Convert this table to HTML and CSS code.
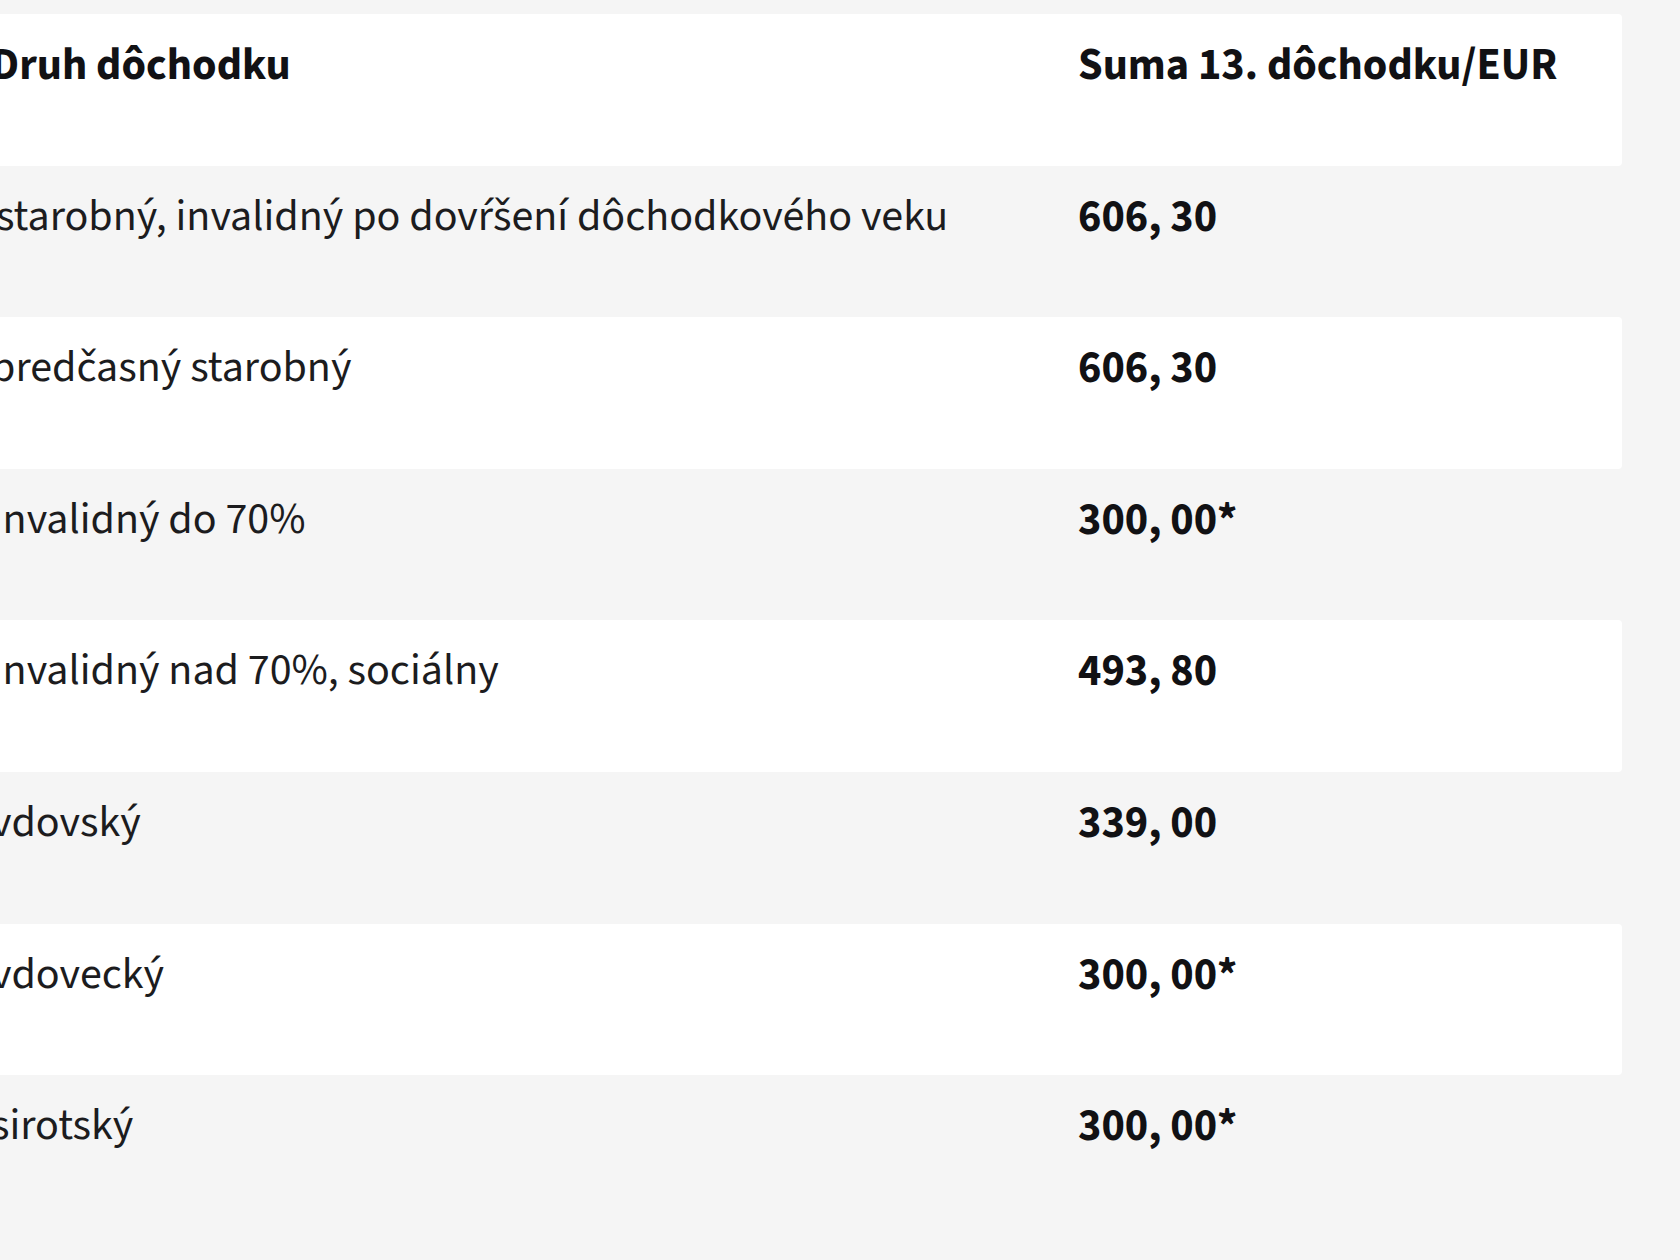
FILE: index.html
```html
<!DOCTYPE html>
<html lang="sk">
<head>
<meta charset="utf-8">
<title>13. dôchodok</title>
<link rel="stylesheet" href="styles.css">
</head>
<body>
<div class="pension-table" role="table">
  <div class="row row-head" role="row">
    <div class="cell" role="columnheader">Druh dôchodku</div>
    <div class="cell" role="columnheader">Suma 13. dôchodku/EUR</div>
  </div>
  <div class="row row-alt row-first" role="row">
    <div class="cell" role="cell">starobný, invalidný po dovŕšení dôchodkového veku</div>
    <div class="cell amount" role="cell">606, 30</div>
  </div>
  <div class="row" role="row">
    <div class="cell" role="cell">predčasný starobný</div>
    <div class="cell amount" role="cell">606, 30</div>
  </div>
  <div class="row row-alt" role="row">
    <div class="cell" role="cell">Invalidný do 70%</div>
    <div class="cell amount" role="cell">300, 00*</div>
  </div>
  <div class="row" role="row">
    <div class="cell" role="cell">Invalidný nad 70%, sociálny</div>
    <div class="cell amount" role="cell">493, 80</div>
  </div>
  <div class="row row-alt" role="row">
    <div class="cell" role="cell">vdovský</div>
    <div class="cell amount" role="cell">339, 00</div>
  </div>
  <div class="row" role="row">
    <div class="cell" role="cell">vdovecký</div>
    <div class="cell amount" role="cell">300, 00*</div>
  </div>
  <div class="row row-alt" role="row">
    <div class="cell" role="cell">sirotský</div>
    <div class="cell amount" role="cell">300, 00*</div>
  </div>
</div>
</body>
</html>
```

FILE: styles.css
```css
html, body {
  margin: 0;
  padding: 0;
  background: #f5f5f5;
  overflow: hidden;
}

body {
  font-family: "Source Sans 3", "Source Sans Pro", Lato, sans-serif;
  font-size: 44px;
  line-height: 1.2;
  color: #1c1c1e;
}

.pension-table {
  margin-top: 14px;
  margin-left: -36px;
  width: 1658px;
}

.row {
  display: grid;
  grid-template-columns: 1087px 1fr;
  height: 151.6px;
  box-sizing: border-box;
  padding: 25px 0 0 27px;
  background: #ffffff;
  border-radius: 4px;
}

.row-alt {
  background: #f5f5f5;
}

.row-first .cell:first-child {
  padding-left: 5px;
}

.cell {
  white-space: nowrap;
}

.row-head .cell {
  font-weight: 700;
  font-size: 44.3px;
  color: #111114;
}

.amount {
  font-weight: 700;
  font-size: 44.3px;
  color: #111114;
}
```
